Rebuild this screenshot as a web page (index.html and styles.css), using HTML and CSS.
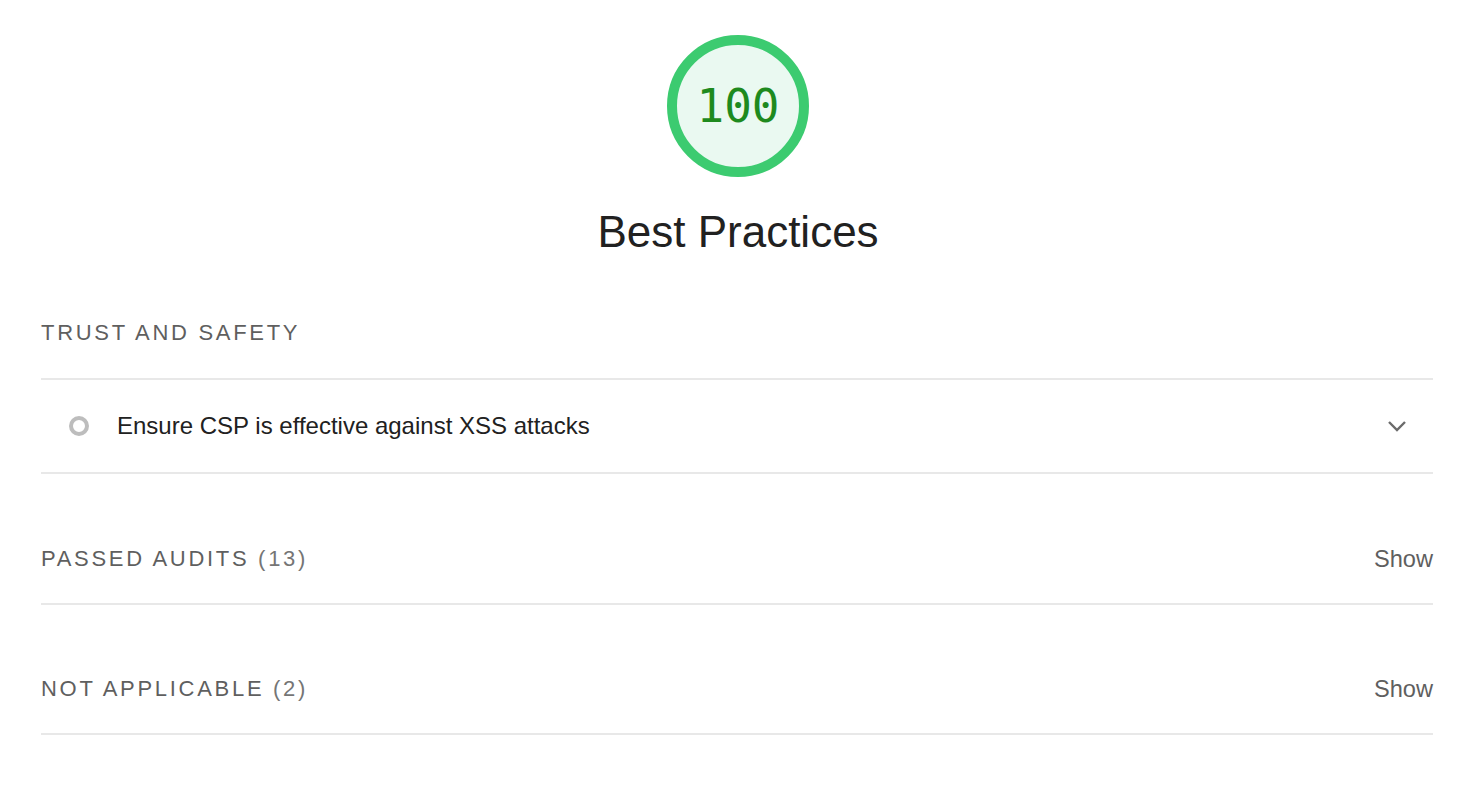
FILE: index.html
```html
<!DOCTYPE html>
<html>
<head>
<meta charset="utf-8">
<link rel="stylesheet" href="styles.css">
</head>
<body>
<div class="report">
  <header class="score-header">
    <div class="gauge">
      <svg class="gauge-svg" viewBox="0 0 144 144" width="144" height="144">
        <circle cx="72" cy="72" r="66" fill="#eaf9f1" stroke="#3ccb70" stroke-width="10"/>
      </svg>
      <span class="gauge-value">100</span>
    </div>
    <h1 class="category-title">Best Practices</h1>
  </header>

  <section class="group">
    <div class="group-title">TRUST AND SAFETY</div>
    <div class="audit">
      <span class="audit-icon"></span>
      <span class="audit-text">Ensure CSP is effective against XSS attacks</span>
      <svg class="chevron" width="20" height="12" viewBox="0 0 20 12"><path d="M2 2 L10 10 L18 2" fill="none" stroke="#6b6b6b" stroke-width="2.4"/></svg>
    </div>
  </section>

  <section class="clump first">
    <div class="clump-title">PASSED AUDITS <span class="count">(13)</span></div>
    <span class="show">Show</span>
  </section>

  <section class="clump">
    <div class="clump-title">NOT APPLICABLE <span class="count">(2)</span></div>
    <span class="show">Show</span>
  </section>
</div>
</body>
</html>
```

FILE: styles.css
```css
html, body {
  margin: 0;
  padding: 0;
  background: #ffffff;
}
body {
  font-family: "Liberation Sans", Arial, sans-serif;
  color: #212121;
}
.report {
  width: 1392px;
  margin-left: 41px;
}
.score-header {
  display: flex;
  flex-direction: column;
  align-items: center;
  padding-top: 34px;
}
.gauge {
  position: relative;
  width: 144px;
  height: 144px;
  margin-left: 2px;
}
.gauge-svg {
  display: block;
}
.gauge-value {
  position: absolute;
  left: 0;
  top: 0;
  width: 100%;
  height: 100%;
  display: flex;
  align-items: center;
  justify-content: center;
  font-family: "DejaVu Sans Mono", monospace;
  font-size: 46px;
  color: #1e8a1e;
}
.category-title {
  margin: 30px 0 0 2px;
  font-size: 44px;
  font-weight: 400;
  line-height: 48px;
  color: #212121;
}
.group {
  margin-top: 65px;
}
.group-title {
  font-size: 22px;
  letter-spacing: 2.7px;
  color: #5f5f5f;
  line-height: 24px;
  padding-bottom: 33px;
  border-bottom: 2px solid #e8e8e8;
}
.audit {
  display: flex;
  align-items: center;
  height: 92px;
  border-bottom: 2px solid #e8e8e8;
}
.audit-icon {
  width: 12px;
  height: 12px;
  border: 4px solid #bdbdbd;
  border-radius: 50%;
  margin-left: 28px;
  margin-right: 28px;
}
.audit-text {
  flex: 1;
  font-size: 24px;
  color: #212121;
}
.chevron {
  margin-right: 26px;
}
.clump {
  display: flex;
  align-items: center;
  justify-content: space-between;
  border-bottom: 2px solid #e8e8e8;
  padding-top: 72px;
  padding-bottom: 32px;
  line-height: 24px;
}
.clump.first {
  margin-top: 1px;
}
.clump-title {
  font-size: 22px;
  letter-spacing: 2.7px;
  color: #5f5f5f;
}
.count {
  color: #757575;
}
.show {
  font-size: 23.6px;
  color: #5f5f5f;
}
```
